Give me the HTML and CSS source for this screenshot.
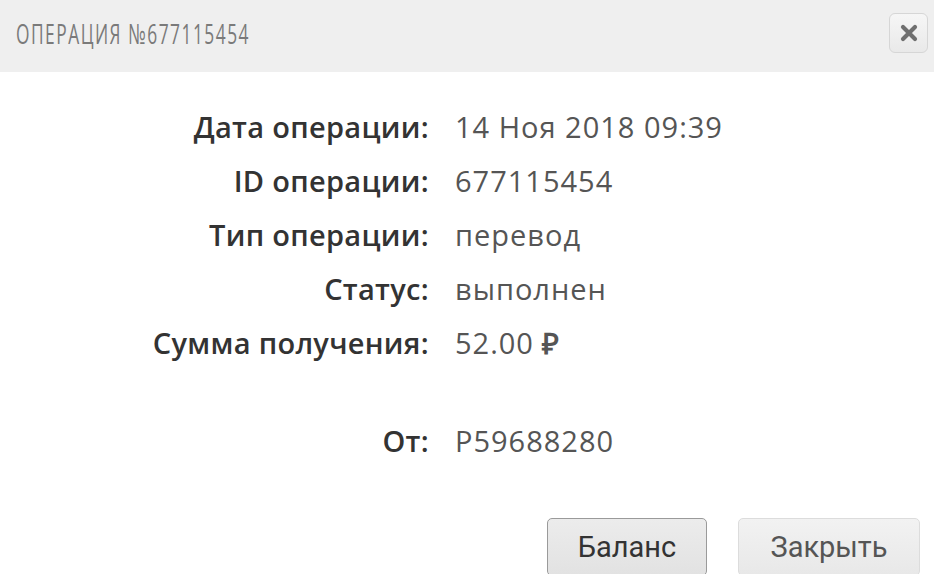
FILE: index.html
```html
<!DOCTYPE html>
<html lang="ru">
<head>
  <meta charset="UTF-8" />
  <meta name="viewport" content="width=device-width, initial-scale=1" />
  <title>Операция №677115454</title>
  <link rel="stylesheet" href="styles.css">
</head>
<body>

  <div class="dialog">
    <div class="dialog-head">
      <div class="dialog-title">Операция №677115454</div>
      <button class="close-btn" title="Закрыть">
        <svg width="18" height="18" viewBox="0 0 18 18">
          <path d="M3 3 L15 15 M15 3 L3 15" stroke="#6f6f6f" stroke-width="4.2" stroke-linecap="round" />
        </svg>
      </button>
    </div>

    <div class="dialog-body">
      <div class="info-grid">
        <div class="label">Дата операции:</div>
        <div class="value">14 Ноя 2018 09:39</div>

        <div class="label">ID операции:</div>
        <div class="value">677115454</div>

        <div class="label">Тип операции:</div>
        <div class="value">перевод</div>

        <div class="label">Статус:</div>
        <div class="value">выполнен</div>

        <div class="label">Сумма получения:</div>
        <div class="value">52.00 <span class="rub">₽</span></div>

        <div class="label spaced">От:</div>
        <div class="value spaced">P59688280</div>
      </div>

      <div class="dialog-buttons">
        <button class="btn btn-active">Баланс</button>
        <button class="btn">Закрыть</button>
      </div>
    </div>
  </div>

</body>
</html>
```

FILE: styles.css
```css
body {
  margin: 0;
  background: #ffffff;
  overflow: hidden;
  font-family: 'Open Sans', sans-serif;
}

.dialog {
  width: 934px;
}

.dialog-head {
  height: 72px;
  background: #efefef;
  display: flex;
  align-items: center;
  justify-content: space-between;
  padding: 0 6px 0 16px;
  box-sizing: border-box;
}

/* the original uses a narrow geometric face, squeeze a regular one */
.dialog-title {
  font-family: 'Open Sans', sans-serif;
  font-size: 28px;
  letter-spacing: 2.4px;
  text-transform: uppercase;
  color: #7a7a7a;
  margin-top: -6px;
  transform: scaleX(0.62);
  transform-origin: left center;
}

.close-btn {
  width: 39px;
  height: 40px;
  margin-top: -6px;
  border: 1px solid #d6d6d6;
  border-radius: 6px;
  background: linear-gradient(#f6f6f6, #e9e9e9);
  display: flex;
  align-items: center;
  justify-content: center;
  padding: 0;
}

.dialog-body {
  padding-top: 38px;
}

.info-grid {
  display: grid;
  grid-template-columns: 429px auto;
  column-gap: 26px;
  row-gap: 21px;
  font-size: 29px;
  line-height: 33px;
}

.label {
  text-align: right;
  color: #333;
  font-weight: 600;
  letter-spacing: 0.3px;
}

.value {
  color: #555;
  letter-spacing: 1px;
}

.rub {
  font-weight: 700;
}

.spaced {
  margin-top: 44px;
}

.dialog-buttons {
  display: flex;
  justify-content: flex-end;
  gap: 31px;
  padding-right: 14px;
  margin-top: 61px;
}

.btn {
  font-family: Roboto, sans-serif;
  font-size: 29px;
  color: #555;
  width: 182px;
  height: 58px;
  padding: 0;
  border: 1px solid #dcdcdc;
  border-radius: 5px;
  background: linear-gradient(#f2f2f2, #e8e8e8);
}

.btn-active {
  width: 160px;
  color: #333;
  border-color: #9a9a9a;
  background: linear-gradient(#ececec, #e2e2e2);
}
```
